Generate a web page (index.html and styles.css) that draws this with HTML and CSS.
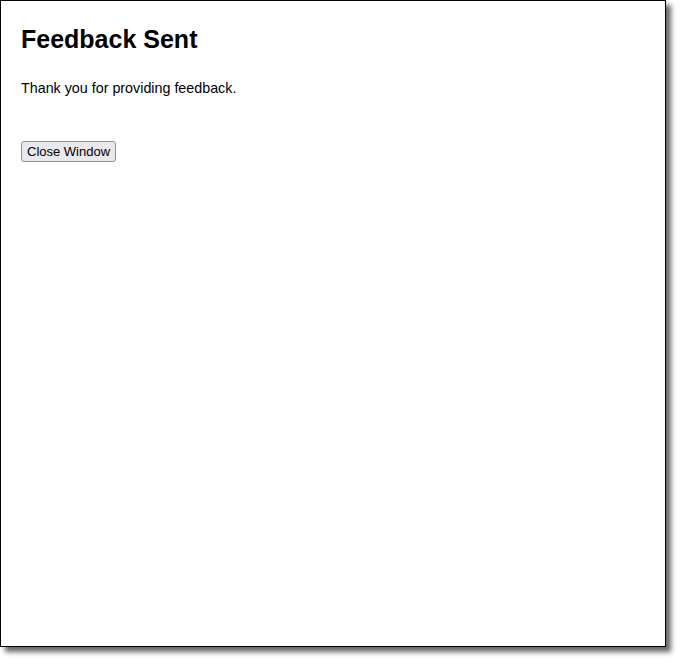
FILE: index.html
```html
<!DOCTYPE html>
<html lang="en">
<head>
<meta charset="utf-8">
<title>Feedback Sent</title>
<link rel="stylesheet" href="styles.css">
</head>
<body>
<div class="frame">
  <h1 class="title">Feedback Sent</h1>
  <p class="message">Thank you for providing feedback.</p>
  <button class="close-btn" type="button">Close Window</button>
</div>
</body>
</html>
```
FILE: styles.css
```css
html, body {
  margin: 0;
  padding: 0;
  background: #ffffff;
}

body {
  box-sizing: border-box;
  min-height: 663px;
  padding-bottom: 16px;
  font-family: "Liberation Sans", Arial, sans-serif;
  color: #000000;
}

.frame {
  box-sizing: border-box;
  width: 666px;
  height: 647px;
  border: 1px solid #000000;
  background: #ffffff;
  box-shadow: 5px 5px 5px rgba(0, 0, 0, 0.6);
  padding: 24px 20px;
}

.title {
  margin: 0;
  font-size: 25px;
  font-weight: bold;
  line-height: 1.15;
}

.message {
  margin: 26px 0 0 0;
  font-size: 14.3px;
  line-height: 1.15;
}

.close-btn {
  display: block;
  margin-top: 45px;
  font-family: "Liberation Sans", Arial, sans-serif;
  font-size: 13px;
  line-height: 15px;
  color: #000000;
  background: #e9e9ed;
  border: 1px solid #8f8f9d;
  border-radius: 3px;
  padding: 2px 5px;
}
```
